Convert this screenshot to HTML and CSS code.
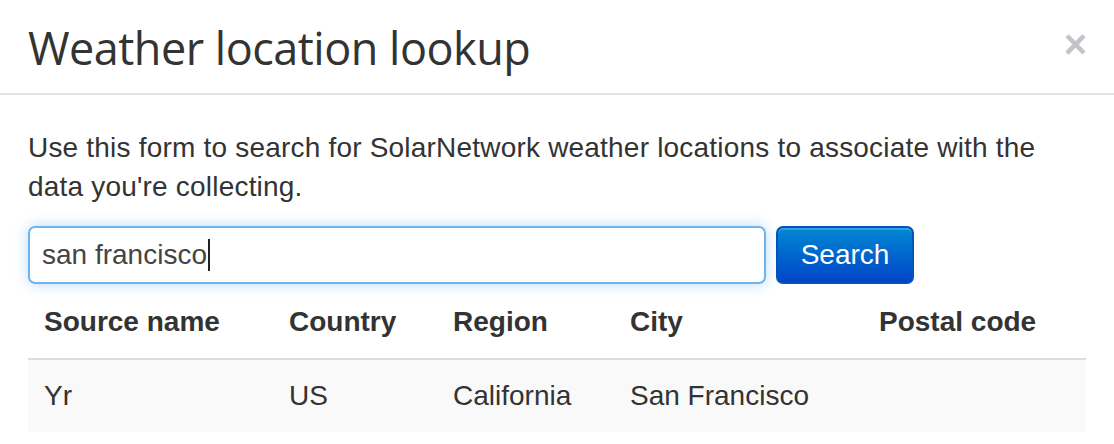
FILE: index.html
```html
<!DOCTYPE html>
<html>
<head>
<meta charset="utf-8">
<link rel="stylesheet" href="styles.css">
</head>
<body>
<div class="modal">
  <div class="modal-header">
    <h3 class="title">Weather location lookup</h3>
    <span class="close">×</span>
  </div>
  <div class="modal-body">
    <p class="intro">Use this form to search for SolarNetwork weather locations to associate with the data you're collecting.</p>
    <div class="search-row">
      <div class="input">san francisco<span class="caret"></span></div>
      <button class="btn">Search</button>
    </div>
    <table class="results">
      <thead>
        <tr><th class="c1">Source name</th><th class="c2">Country</th><th class="c3">Region</th><th class="c4">City</th><th class="c5">Postal code</th></tr>
      </thead>
      <tbody>
        <tr><td>Yr</td><td>US</td><td>California</td><td>San Francisco</td><td></td></tr>
      </tbody>
    </table>
  </div>
</div>
</body>
</html>
```
FILE: styles.css
```css
html, body { margin: 0; padding: 0; background: #fff; }
body { font-family: "Liberation Sans", Arial, sans-serif; color: #333; }
.modal { width: 1114px; height: 444px; overflow: hidden; }
.modal-header {
  height: 93px;
  border-bottom: 2px solid #e5e5e5;
  display: flex;
  align-items: flex-start;
  justify-content: space-between;
  padding: 0 28px;
}
.title {
  margin: 0;
  padding-top: 18px;
  font-family: "Open Sans", sans-serif;
  font-weight: 400;
  font-size: 45px;
  line-height: 60px;
  color: #333;
  letter-spacing: -0.5px;
}
.close {
  margin-top: 24px;
  margin-right: -1px;
  font-size: 40px;
  font-weight: bold;
  line-height: 40px;
  color: #c4c4c4;
}
.modal-body { padding: 33px 28px 0; }
.intro {
  margin: 0 0 20px;
  font-size: 28px;
  line-height: 39px;
  color: #333;
  letter-spacing: 0.2px;
}
.search-row { display: flex; gap: 10px; align-items: center; }
.input {
  box-sizing: border-box;
  width: 738px;
  height: 58px;
  border: 2px solid #6cb3ef;
  border-radius: 7px;
  box-shadow: 0 0 14px rgba(102,175,233,0.45);
  padding: 0 12px;
  display: flex;
  align-items: center;
  font-size: 28px;
  color: #444;
}
.caret { display: inline-block; width: 2px; height: 32px; background: #222; margin-left: 1px; }
.btn {
  box-sizing: border-box;
  width: 138px;
  height: 58px;
  border: 2px solid #0055bb;
  border-radius: 7px;
  background: linear-gradient(#0088d2, #0044c8);
  color: #fff;
  font-family: "Liberation Sans", Arial, sans-serif;
  font-size: 28px;
  padding: 0;
  box-shadow: inset 0 2px 0 rgba(255,255,255,0.2);
}
.results {
  width: 1058px;
  margin-top: 11px;
  border-collapse: collapse;
  font-size: 28px;
}
.results th {
  text-align: left;
  font-weight: bold;
  height: 43px;
  padding: 0 16px 20px;
  vertical-align: bottom;
  border-bottom: 2px solid #dddddd;
}
.results td {
  padding: 0 16px;
  height: 72px;
  background: #f9f9f9;
}
.c1 { width: 213px; }
.c2 { width: 132px; }
.c3 { width: 145px; }
.c4 { width: 217px; }
```
